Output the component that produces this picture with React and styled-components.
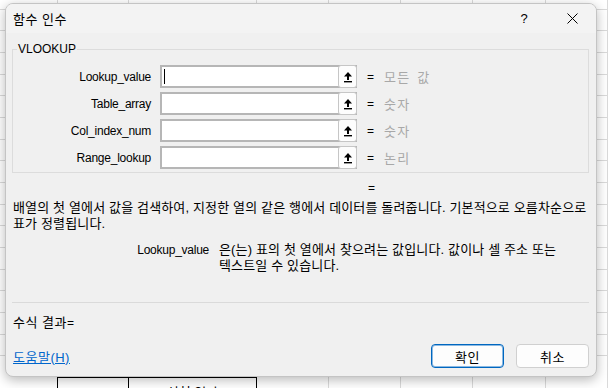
import React from 'react'
import styled, { createGlobalStyle } from 'styled-components'

const GlobalStyle = createGlobalStyle`
  html, body { margin: 0; padding: 0; }
  body {
    width: 608px;
    height: 388px;
    overflow: hidden;
    font-family: "Liberation Sans", "Noto Sans CJK KR", sans-serif;
    font-size: 12px;
    color: #000;
    word-break: keep-all;
  }
`

// spreadsheet behind the dialog
const columns = [
  { w: 58 },
  { w: 71, boxed: true },
  { w: 128, boxed: true, text: '신청 일자' },
  { w: 72 },
  { w: 72 },
  { w: 72 },
  { w: 73 },
  { w: 62 },
]

const Sheet = styled.div`
  position: relative;
  width: 608px;
  height: 388px;
  display: flex;
  background-color: #fff;
  background-image: repeating-linear-gradient(
    to bottom,
    transparent 0,
    transparent 20.67px,
    #dadada 20.67px,
    #dadada 21.67px
  );
  background-position: 0 -12px;
  overflow: hidden;
`

const Column = styled.div`
  flex: 0 0 ${p => p.$w}px;
  height: 100%;
  box-sizing: border-box;
  border-right: 1px solid #dadada;
  display: flex;
  flex-direction: column;
  justify-content: flex-end;
`

const BoxCell = styled.div`
  height: 10px;
  margin-right: -1px;
  margin-left: -1px;
  border: 1px solid #000;
  border-bottom: none;
  background: #fff;
  text-align: center;
  font-size: 13px;
  line-height: 30px;
  overflow: hidden;
`

const Dialog = styled.div`
  position: absolute;
  left: 5px;
  top: 3px;
  width: 592px;
  height: 374px;
  box-sizing: border-box;
  background: #f0f0f0;
  border: 1px solid #c4c4c4;
  border-radius: 8px;
  box-shadow: 0 3px 12px rgba(0, 0, 0, 0.28);
  display: flex;
  flex-direction: column;
  overflow: hidden;
`

const Ko = styled.span`
  font-size: 13px;
  letter-spacing: 0.5px;
`

const TitleBar = styled.div`
  height: 29px;
  display: flex;
  align-items: center;
  background: #f3f3f3;
  padding-left: 7px;
`

const Title = styled.div`
  flex: 1;
`

const CaptionButton = styled.div`
  width: 48px;
  height: 29px;
  display: flex;
  align-items: center;
  justify-content: center;
  font-size: 13px;
`

const Body = styled.div`
  flex: 1;
  display: flex;
  flex-direction: column;
  padding: 0 7px 8px 6px;
`

const Group = styled.fieldset`
  margin: 8px 0 0 0;
  padding: 8px 0 3px 0;
  border: 1px solid #dcdcdc;
  min-width: 0;
`

const Legend = styled.legend`
  margin-left: 4px;
  padding: 0 1px;
  line-height: 16px;
  font-size: 12px;
`

const ArgGrid = styled.div`
  display: grid;
  grid-template-columns: 138px 197px 9px auto;
  column-gap: 9px;
  row-gap: 4px;
  align-items: center;
`

const ArgLabel = styled.div`
  text-align: right;
  letter-spacing: -0.25px;
`

const Field = styled.div`
  height: 23px;
  box-sizing: border-box;
  border: 2px solid #b6b6b6;
  background: #fff;
  display: flex;
  align-items: stretch;
`

const FieldText = styled.div`
  flex: 1;
  position: relative;
`

const Caret = styled.span`
  position: absolute;
  left: 2px;
  top: 2px;
  width: 1px;
  height: 15px;
  background: #000;
`

const RefButton = styled.div`
  width: 19px;
  margin: -2px -2px -2px 0;
  box-sizing: border-box;
  border: 1px solid #c6c6c6;
  border-radius: 3px;
  background: #fdfdfd;
  display: flex;
  align-items: center;
  justify-content: center;
`

const Eq = styled.div`
  text-align: center;
`

const Hint = styled.div`
  color: #a8a8a8;
  font-size: 13px;
  letter-spacing: 1.2px;
  word-spacing: 2px;
`

const EqLine = styled.div`
  margin-top: 7px;
  padding-left: 356px;
  line-height: 16px;
`

const Description = styled.p`
  margin: 4px 0 0 1px;
  line-height: 16px;
  width: 576px;
  font-size: 13px;
  letter-spacing: 0.15px;
`

const ArgHelp = styled.div`
  display: grid;
  grid-template-columns: 197px 340px;
  column-gap: 10px;
  margin-top: 10px;
  line-height: 16px;
`

const HelpLabel = styled.div`
  text-align: right;
  letter-spacing: -0.25px;
`

const HelpText = styled.div`
  font-size: 13px;
  letter-spacing: 0.15px;
`

const Separator = styled.div`
  margin-top: 28px;
  border-top: 1px solid #dadada;
`

const Result = styled.div`
  margin-top: 12px;
  margin-left: 1px;
  line-height: 16px;
`

const Footer = styled.div`
  margin-top: auto;
  display: flex;
  align-items: center;
  gap: 12px;
`

const HelpLink = styled.a`
  flex: 1;
  margin-left: 1px;
  color: #0066cc;
  text-decoration: underline;
  cursor: pointer;
`

const Button = styled.button`
  width: 73px;
  height: 24px;
  box-sizing: border-box;
  font-family: inherit;
  font-size: 13px;
  letter-spacing: 0.5px;
  color: #000;
  background: #fdfdfd;
  border-radius: 4px;
  border: 1px solid ${p => (p.$primary ? '#0067c0' : '#d0d0d0')};
  box-shadow: ${p => (p.$primary ? 'inset 0 0 0 1px rgba(0,103,192,0.45)' : 'none')};
  padding: 0;
`

const RefIcon = () => (
  <svg width="10" height="12" viewBox="0 0 10 12">
    <polygon points="5,1 9,5.5 1,5.5" fill="#000" />
    <rect x="4" y="5" width="2" height="4" fill="#000" />
    <rect x="1" y="10" width="8" height="1.4" fill="#000" />
  </svg>
)

const CloseIcon = () => (
  <svg width="11" height="11" viewBox="0 0 11 11">
    <path d="M0.5 0.5 L10.5 10.5 M10.5 0.5 L0.5 10.5" stroke="#000" strokeWidth="1" />
  </svg>
)

const args = [
  { name: 'Lookup_value', hint: '모든 값', focused: true },
  { name: 'Table_array', hint: '숫자' },
  { name: 'Col_index_num', hint: '숫자' },
  { name: 'Range_lookup', hint: '논리' },
]

export default function App() {
  return (
    <>
      <GlobalStyle />
      <Sheet>
        {columns.map((c, i) => (
          <Column key={i} $w={c.w}>
            {c.boxed && <BoxCell>{c.text}</BoxCell>}
          </Column>
        ))}
        <Dialog>
          <TitleBar>
            <Title><Ko>함수 인수</Ko></Title>
            <CaptionButton>?</CaptionButton>
            <CaptionButton>
              <CloseIcon />
            </CaptionButton>
          </TitleBar>
          <Body>
            <Group>
              <Legend>VLOOKUP</Legend>
              <ArgGrid>
                {args.map(a => (
                  <React.Fragment key={a.name}>
                    <ArgLabel>{a.name}</ArgLabel>
                    <Field>
                      <FieldText>{a.focused && <Caret />}</FieldText>
                      <RefButton>
                        <RefIcon />
                      </RefButton>
                    </Field>
                    <Eq>=</Eq>
                    <Hint>{a.hint}</Hint>
                  </React.Fragment>
                ))}
              </ArgGrid>
            </Group>
            <EqLine>=</EqLine>
            <Description>
              배열의 첫 열에서 값을 검색하여, 지정한 열의 같은 행에서 데이터를 돌려줍니다. 기본적으로 오름차순으로 표가 정렬됩니다.
            </Description>
            <ArgHelp>
              <HelpLabel>Lookup_value</HelpLabel>
              <HelpText>은(는) 표의 첫 열에서 찾으려는 값입니다. 값이나 셀 주소 또는 텍스트일 수 있습니다.</HelpText>
            </ArgHelp>
            <Separator />
            <Result><Ko>수식 결과</Ko>=</Result>
            <Footer>
              <HelpLink><Ko>도움말(H)</Ko></HelpLink>
              <Button $primary>확인</Button>
              <Button>취소</Button>
            </Footer>
          </Body>
        </Dialog>
      </Sheet>
    </>
  )
}
